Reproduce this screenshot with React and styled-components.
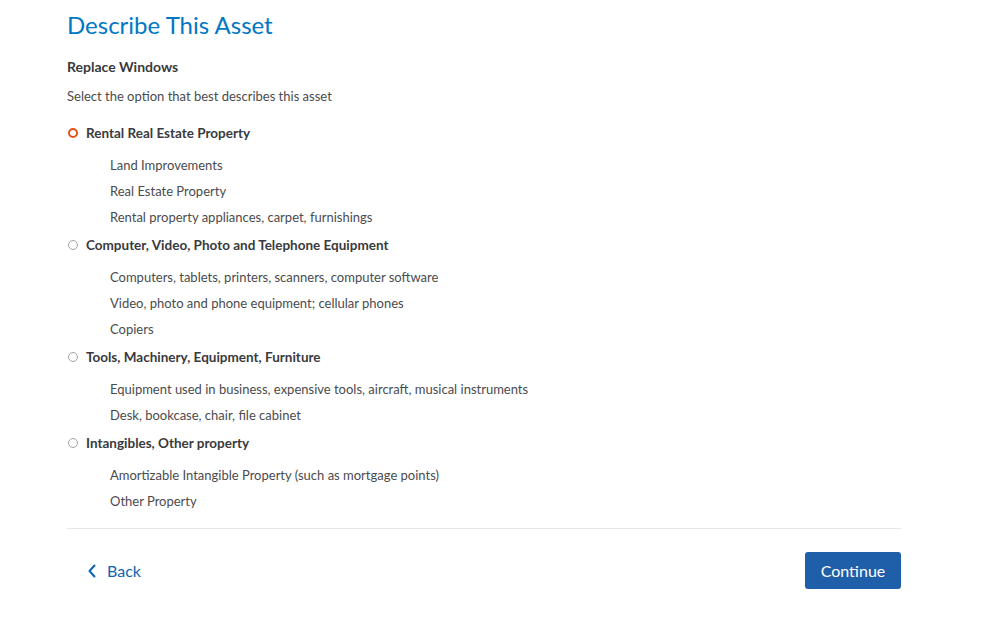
import React, {useState} from "react";
import styled, {createGlobalStyle} from "styled-components";

const GlobalStyle = createGlobalStyle`
  body {
    margin: 0;
    background: #fff;
    font-family: Lato, "Noto Sans", "Liberation Sans", sans-serif;
    color: #393a3d;
  }
`;

const GROUPS = [
  {
    label: "Rental Real Estate Property",
    items: ["Land Improvements", "Real Estate Property", "Rental property appliances, carpet, furnishings"],
  },
  {
    label: "Computer, Video, Photo and Telephone Equipment",
    items: ["Computers, tablets, printers, scanners, computer software", "Video, photo and phone equipment; cellular phones", "Copiers"],
  },
  {
    label: "Tools, Machinery, Equipment, Furniture",
    items: ["Equipment used in business, expensive tools, aircraft, musical instruments", "Desk, bookcase, chair, file cabinet"],
  },
  {
    label: "Intangibles, Other property",
    items: ["Amortizable Intangible Property (such as mortgage points)", "Other Property"],
  },
];

const App = () => {
  const [selected, setSelected] = useState(0);

  return (
    <>
      <GlobalStyle />
      <Page>
        <Title>Describe This Asset</Title>
        <AssetName>Replace Windows</AssetName>
        <Hint>Select the option that best describes this asset</Hint>
        <Options>
          {GROUPS.map((g, i) => (
            <Group key={g.label}>
              <OptionRow onClick={() => setSelected(i)}>
                <Radio $checked={selected === i} />
                <OptionLabel>{g.label}</OptionLabel>
              </OptionRow>
              <SubList>
                {g.items.map((item) => (
                  <SubItem key={item}>{item}</SubItem>
                ))}
              </SubList>
            </Group>
          ))}
        </Options>
        <Footer>
          <BackLink>
            <svg width="12" height="16" viewBox="0 0 12 16">
              <path d="M8.5 2.5 L3.5 8 L8.5 13.5" fill="none" stroke="#0d64b3" strokeWidth="2" strokeLinecap="round" strokeLinejoin="round" />
            </svg>
            Back
          </BackLink>
          <ContinueButton>Continue</ContinueButton>
        </Footer>
      </Page>
    </>
  );
};

const Page = styled.div`
  width: 834px;
  padding: 9px 0 0 67px;
`;

const Title = styled.h1`
  margin: 0;
  font-size: 24px;
  font-weight: 400;
  line-height: 32px;
  color: #0077c5;
`;

const AssetName = styled.div`
  margin-top: 16px;
  font-size: 14px;
  font-weight: 700;
  line-height: 20px;
  color: #393a3d;
`;

const Hint = styled.div`
  margin-top: 9px;
  font-size: 13px;
  line-height: 20px;
  color: #4a4b4e;
`;

const Options = styled.div`
  margin-top: 17px;
  display: flex;
  flex-direction: column;
  gap: 5px;
`;

const Group = styled.div`
  display: flex;
  flex-direction: column;
`;

const OptionRow = styled.label`
  display: flex;
  align-items: center;
  height: 20px;
  cursor: pointer;
`;

const Radio = styled.span`
  box-sizing: border-box;
  width: 10px;
  height: 10px;
  margin-left: 1px;
  margin-right: 8px;
  border-radius: 50%;
  border: ${(p) => (p.$checked ? "2.5px solid #e8501a" : "1px solid #a0a2a6")};
  flex-shrink: 0;
`;

const OptionLabel = styled.span`
  font-size: 13.5px;
  font-weight: 700;
  color: #393a3d;
`;

const SubList = styled.div`
  margin-top: 9px;
  padding-left: 43px;
  display: flex;
  flex-direction: column;
`;

const SubItem = styled.div`
  font-size: 13px;
  line-height: 26px;
  color: #4a4b4e;
`;

const Footer = styled.div`
  margin-top: 14px;
  border-top: 1px solid #e6e7e9;
  display: flex;
  justify-content: space-between;
  align-items: center;
  padding-top: 23px;
`;

const BackLink = styled.a`
  display: flex;
  align-items: center;
  gap: 9px;
  margin-left: 19px;
  font-size: 16px;
  color: #0d64b3;
  cursor: pointer;
`;

const ContinueButton = styled.button`
  width: 96px;
  height: 37px;
  border: none;
  border-radius: 3px;
  background: #1f5ea8;
  color: #fff;
  font-family: inherit;
  font-size: 16px;
  cursor: pointer;
`;

export default App;
